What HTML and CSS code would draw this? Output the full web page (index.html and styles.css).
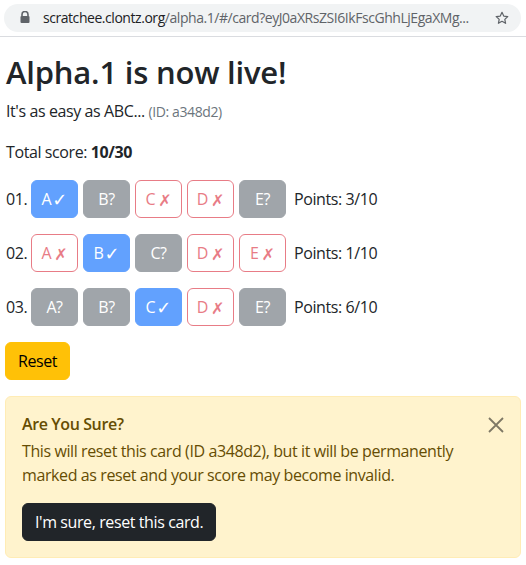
FILE: index.html
```html
<!DOCTYPE html>
<html>
<head>
<meta charset="utf-8">
<link rel="stylesheet" href="styles.css">
</head>
<body>
<div class="browserbar">
  <div class="omnibox">
    <svg class="lock" width="10" height="12" viewBox="0 0 10 12"><path d="M2 5V3.5a3 3 0 0 1 6 0V5" fill="none" stroke="#5f6368" stroke-width="1.6"/><rect x="0.5" y="5" width="9" height="7" rx="1" fill="#5f6368"/></svg>
    <span class="url"><span class="host">scratchee.clontz.org</span>/alpha.1/#/card?eyJ0aXRsZSI6IkFscGhhLjEgaXMg...</span>
    <svg class="star" width="16" height="16" viewBox="0 0 24 24"><path d="M12 3.5l2.6 5.6 6.1.7-4.5 4.2 1.2 6L12 17l-5.4 3 1.2-6L3.3 9.8l6.1-.7z" fill="none" stroke="#5f6368" stroke-width="1.8" stroke-linejoin="round"/></svg>
  </div>
</div>
<main class="page">
  <h1 class="title">Alpha.1 is now live!</h1>
  <p class="para">It's as easy as ABC... <small class="muted">(ID: a348d2)</small></p>
  <p class="para">Total score: <strong>10/30</strong></p>

  <div class="row">
    <span class="num">01.</span>
    <span class="btn btn-blue">A<span class="mk">✓</span></span>
    <span class="btn btn-grey">B?</span>
    <span class="btn btn-red">C<span class="mk">✗</span></span>
    <span class="btn btn-red">D<span class="mk">✗</span></span>
    <span class="btn btn-grey">E?</span>
    <span class="points">Points: 3/10</span>
  </div>
  <div class="row">
    <span class="num">02.</span>
    <span class="btn btn-red">A<span class="mk">✗</span></span>
    <span class="btn btn-blue">B<span class="mk">✓</span></span>
    <span class="btn btn-grey">C?</span>
    <span class="btn btn-red">D<span class="mk">✗</span></span>
    <span class="btn btn-red">E<span class="mk">✗</span></span>
    <span class="points">Points: 1/10</span>
  </div>
  <div class="row">
    <span class="num">03.</span>
    <span class="btn btn-grey">A?</span>
    <span class="btn btn-grey">B?</span>
    <span class="btn btn-blue">C<span class="mk">✓</span></span>
    <span class="btn btn-red">D<span class="mk">✗</span></span>
    <span class="btn btn-grey">E?</span>
    <span class="points">Points: 6/10</span>
  </div>

  <div class="actions"><span class="btn btn-warning">Reset</span></div>

  <div class="alert">
    <strong class="alert-title">Are You Sure?</strong>
    <p class="alert-text">This will reset this card (ID a348d2), but it will be permanently marked as reset and your score may become invalid.</p>
    <span class="btn btn-dark">I'm sure, reset this card.</span>
    <svg class="close" width="16" height="16" viewBox="0 0 16 16"><path d="M1 1L15 15M15 1L1 15" stroke="#000" stroke-width="1.8"/></svg>
  </div>
</main>
</body>
</html>
```

FILE: styles.css
```css
* { box-sizing: border-box; }
html, body { margin: 0; padding: 0; background: #fff; }
body {
  font-family: "Open Sans", "Liberation Sans", sans-serif;
  font-size: 16px;
  line-height: 24px;
  letter-spacing: -0.4px;
  color: #212529;
  width: 526px;
}
.browserbar {
  height: 37px;
  border-bottom: 1px solid #dadce0;
  padding: 4px 5px 0 4px;
  background: #fff;
}
.omnibox {
  height: 28px;
  border-radius: 14px;
  background: #f1f3f4;
  display: flex;
  align-items: center;
  padding: 0 11px 0 16px;
}
.lock { flex: none; margin-right: 13px; margin-top: -2px; }
.url {
  flex: 1;
  font-size: 14px;
  letter-spacing: -0.45px;
  color: #5f6368;
  white-space: nowrap;
}
.host { color: #202124; }
.star { flex: none; margin-left: 6px; }

.page { padding: 16px 5px 0 5px; }
.title {
  margin: 0 0 8px 1px;
  font-size: 31px;
  line-height: 38px;
  font-weight: 600;
  letter-spacing: -0.2px;
}
.para { margin: 0 0 16px 1px; }
.muted { font-size: 14px; color: #6c757d; }
strong { font-weight: 700; }

.row {
  display: flex;
  align-items: center;
  gap: 5px;
  margin: 0 0 16px 1px;
}
.num { width: 20px; }
.btn {
  display: inline-block;
  height: 38px;
  padding: 6px 12px;
  border: 1px solid transparent;
  border-radius: 6px;
  line-height: 24px;
  text-align: center;
}
.row .btn { width: 47px; padding: 6px 0; }
.mk {
  font-family: "DejaVu Sans", sans-serif;
  font-size: 18px;
  line-height: 20px;
  letter-spacing: 0;
  vertical-align: -1px;
}
.btn-blue .mk { margin-left: 1px; }
.btn-blue { background: #62a1fe; border-color: #62a1fe; color: #fff; }
.btn-grey { background: #a0a5aa; border-color: #a0a5aa; color: #fff; }
.btn-red { background: #fff; border-color: #e87c86; color: #e87c86; }
.btn-red .mk { margin-left: 3px; font-size: 16px; }
.points { margin-left: 3px; }

.actions { margin-bottom: 16px; }
.btn-warning { background: #ffc107; border-color: #ffc107; color: #000; }

.alert {
  position: relative;
  background: #fff3cd;
  border: 1px solid #ffecb5;
  border-radius: 6px;
  color: #664d03;
  padding: 16px;
}
.alert-title { display: block; margin-bottom: 3px; font-weight: 600; margin-top: -1px; }
.alert-text { margin: 0 0 16px 0; padding-right: 30px; }
.btn-dark { background: #212529; border-color: #212529; color: #fff; }
.close { position: absolute; top: 20px; right: 16px; opacity: 0.5; }
```
